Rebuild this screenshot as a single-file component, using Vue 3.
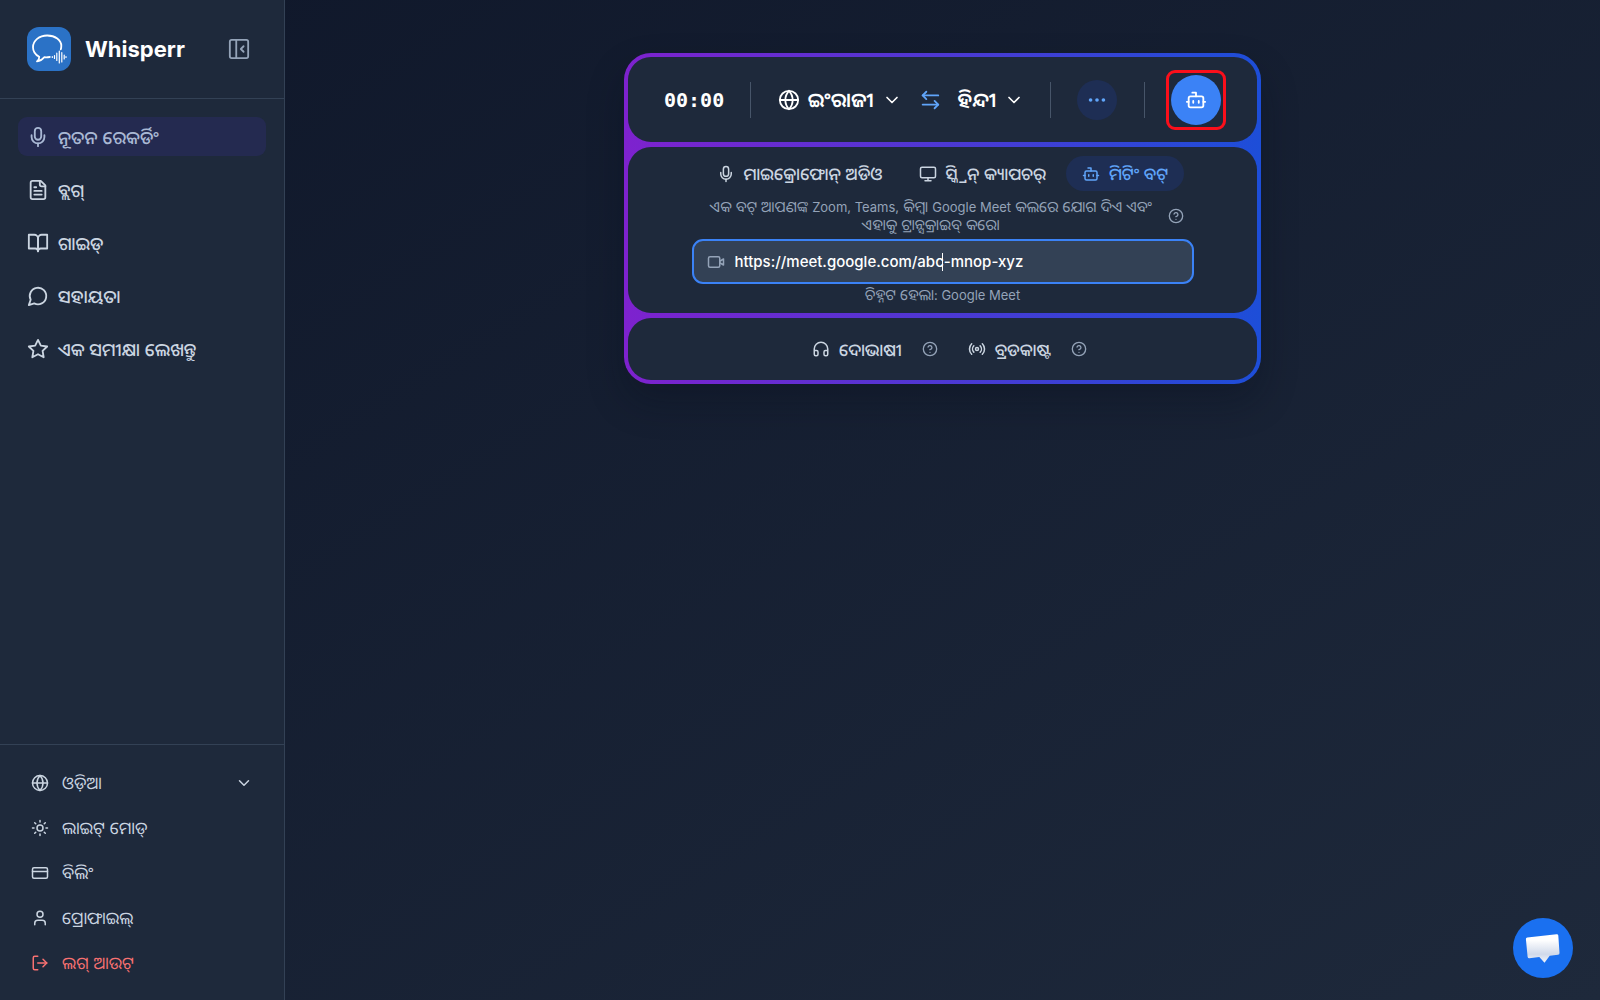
<script setup>
import { ref } from 'vue'

const icons = {
  mic: '<path d="M12 19v3"/><path d="M19 10v2a7 7 0 0 1-14 0v-2"/><rect x="8.5" y="2" width="7" height="13" rx="3.5"/>',
  file: '<path d="M15 2H6a2 2 0 0 0-2 2v16a2 2 0 0 0 2 2h12a2 2 0 0 0 2-2V7Z"/><path d="M14 2v4a2 2 0 0 0 2 2h4"/><path d="M10 9H8"/><path d="M16 13H8"/><path d="M16 17H8"/>',
  book: '<path d="M2 3h6a4 4 0 0 1 4 4v14a3 3 0 0 0-3-3H2z"/><path d="M22 3h-6a4 4 0 0 0-4 4v14a3 3 0 0 1 3-3h7z"/>',
  chat: '<path d="M7.9 20A9 9 0 1 0 4 16.1L2 22Z"/>',
  star: '<path d="M12 2l3.09 6.26L22 9.27l-5 4.87 1.18 6.88L12 17.77l-6.18 3.25L7 14.14 2 9.27l6.91-1.01z"/>',
  globe: '<circle cx="12" cy="12" r="10"/><path d="M12 2a14.5 14.5 0 0 0 0 20 14.5 14.5 0 0 0 0-20"/><path d="M2 12h20"/>',
  sun: '<circle cx="12" cy="12" r="4"/><path d="M12 2v2M12 20v2M4.93 4.93l1.41 1.41M17.66 17.66l1.41 1.41M2 12h2M20 12h2M6.34 17.66l-1.41 1.41M19.07 4.93l-1.41 1.41"/>',
  card: '<rect x="2" y="5" width="20" height="14" rx="2"/><path d="M2 10h20"/>',
  user: '<path d="M19 21v-2a4 4 0 0 0-4-4H9a4 4 0 0 0-4 4v2"/><circle cx="12" cy="7" r="4"/>',
  logout: '<path d="M9 21H5a2 2 0 0 1-2-2V5a2 2 0 0 1 2-2h4"/><path d="m16 17 5-5-5-5"/><path d="M21 12H9"/>',
  chevron: '<path d="m6 9 6 6 6-6"/>',
  swap: '<path d="M8 3 4 7l4 4"/><path d="M4 7h17"/><path d="m17 21 4-4-4-4"/><path d="M21 17H4"/>',
  dots: '<g fill="currentColor"><circle cx="12" cy="12" r="1"/><circle cx="19" cy="12" r="1"/><circle cx="5" cy="12" r="1"/></g>',
  bot: '<path d="M12 8V4H8"/><rect width="16" height="12" x="4" y="8" rx="2"/><path d="M2 14h2M20 14h2M15 13v2M9 13v2"/>',
  monitor: '<rect width="20" height="14" x="2" y="3" rx="2"/><path d="M8 21h8M12 17v4"/>',
  help: '<circle cx="12" cy="12" r="10"/><path d="M9.09 9a3 3 0 0 1 5.83 1c0 2-3 3-3 3"/><path d="M12 17h.01"/>',
  video: '<path d="m17 11 5-3v8l-5-3"/><rect x="2" y="5" width="15" height="14" rx="2"/>',
  headphones: '<path d="M3 14h3a2 2 0 0 1 2 2v3a2 2 0 0 1-2 2H5a2 2 0 0 1-2-2v-7a9 9 0 0 1 18 0v7a2 2 0 0 1-2 2h-1a2 2 0 0 1-2-2v-3a2 2 0 0 1 2-2h3"/>',
  radio: '<path d="M4.9 19.1C1 15.2 1 8.8 4.9 4.9M7.8 16.2c-2.3-2.3-2.3-6.1 0-8.5M16.2 7.8c2.3 2.3 2.3 6.1 0 8.5M19.1 4.9C23 8.8 23 15.1 19.1 19"/><circle cx="12" cy="12" r="2"/>',
  panel: '<rect width="20" height="20" x="2" y="2" rx="2"/><path d="M9 2v20M17 15l-3-3 3-3"/>'
}

const nav = [
  { icon: 'mic', label: 'ନୂତନ ରେକର୍ଡିଂ', active: true },
  { icon: 'file', label: 'ବ୍ଲଗ୍' },
  { icon: 'book', label: 'ଗାଇଡ୍' },
  { icon: 'chat', label: 'ସହାୟତା' },
  { icon: 'star', label: 'ଏକ ସମୀକ୍ଷା ଲେଖନ୍ତୁ' }
]
const account = [
  { icon: 'globe', label: 'ଓଡ଼ିଆ', menu: true },
  { icon: 'sun', label: 'ଲାଇଟ୍ ମୋଡ୍' },
  { icon: 'card', label: 'ବିଲିଂ' },
  { icon: 'user', label: 'ପ୍ରୋଫାଇଲ୍' },
  { icon: 'logout', label: 'ଲଗ୍ ଆଉଟ୍', danger: true }
]
const sources = [
  { icon: 'mic', label: 'ମାଇକ୍ରୋଫୋନ୍ ଅଡିଓ' },
  { icon: 'monitor', label: 'ସ୍କ୍ରିନ୍ କ୍ୟାପଚର୍' },
  { icon: 'bot', label: 'ମିଟିଂ ବଟ୍', active: true }
]
const link = ref('https://meet.google.com/abc-mnop-xyz')
</script>

<template>
  <div class="app">
    <aside class="sidebar">
      <header class="brand">
        <svg class="logo" viewBox="0 0 44 44" aria-hidden="true">
          <rect width="44" height="44" rx="12" fill="#2b72c6" />
          <g fill="none" stroke="#fff" stroke-linecap="round" stroke-linejoin="round">
            <path stroke-width="1.8" d="M33.8 22.3c.4-1.2.5-2.3.5-3.5C34.300 12.800 28.200 8.500 20.200 8.500S6 13.500 6 20.200c0 4.200 2.200 7.400 6.200 9.600.2 1.600-.6 3.200-2.200 4.600 3.600-.4 5.600-2.200 7.200-4.200 1.900.2 3.700.1 5.600-.2" />
            <path stroke-width="1.2" d="M25.3 29.500v1M27.500 28.500v3M29.800 26v7.500M32.300 24v12M34.800 25.500V35M37.200 28v4M39 29.500v1" />
          </g>
        </svg>
        <h1>Whisperr</h1>
        <button class="collapse" type="button" aria-label="Collapse">
          <svg class="ic s22" viewBox="0 0 24 24" v-html="icons.panel"></svg>
        </button>
      </header>

      <nav class="nav">
        <a v-for="n in nav" :key="n.icon" href="#" :class="{ active: n.active }">
          <svg class="ic s22" viewBox="0 0 24 24" v-html="icons[n.icon]"></svg>
          <span>{{ n.label }}</span>
        </a>
      </nav>

      <div class="account">
        <button v-for="a in account" :key="a.icon" type="button" :class="{ danger: a.danger }">
          <svg class="ic s18" viewBox="0 0 24 24" v-html="icons[a.icon]"></svg>
          <span>{{ a.label }}</span>
          <svg v-if="a.menu" class="ic s18 end" viewBox="0 0 24 24" v-html="icons.chevron"></svg>
        </button>
      </div>
    </aside>

    <main class="main">
      <section class="recorder">
        <div class="panel controls">
          <time class="timer">00:00</time>
          <i class="rule"></i>
          <div class="langs">
            <button class="lang" type="button">
              <svg class="ic s22" viewBox="0 0 24 24" v-html="icons.globe"></svg>
              <span>ଇଂରାଜୀ</span>
              <svg class="ic s20" viewBox="0 0 24 24" v-html="icons.chevron"></svg>
            </button>
            <button class="swap" type="button" aria-label="Swap">
              <svg class="ic s22" viewBox="0 0 24 24" v-html="icons.swap"></svg>
            </button>
            <button class="lang" type="button">
              <span>ହିନ୍ଦୀ</span>
              <svg class="ic s20" viewBox="0 0 24 24" v-html="icons.chevron"></svg>
            </button>
          </div>
          <i class="rule"></i>
          <button class="more" type="button" aria-label="More">
            <svg class="ic s22" viewBox="0 0 24 24" v-html="icons.dots"></svg>
          </button>
          <i class="rule"></i>
          <div class="highlight">
            <button class="start" type="button" aria-label="Start">
              <svg class="ic s22" viewBox="0 0 24 24" v-html="icons.bot"></svg>
            </button>
          </div>
        </div>

        <div class="panel source">
          <div class="tabs">
            <button v-for="s in sources" :key="s.icon" type="button" :class="{ active: s.active }">
              <svg class="ic s18" viewBox="0 0 24 24" v-html="icons[s.icon]"></svg>
              <span>{{ s.label }}</span>
            </button>
          </div>
          <div class="about">
            <p>
              ଏକ ବଟ୍ ଆପଣଙ୍କ <span class="latin">Zoom, Teams,</span> କିମ୍ବା
              <span class="latin">Google Meet</span> କଲରେ ଯୋଗ ଦିଏ ଏବଂ<br>ଏହାକୁ ଟ୍ରାନ୍ସକ୍ରାଇବ୍ କରେ।
            </p>
            <svg class="ic s16" viewBox="0 0 24 24" v-html="icons.help"></svg>
          </div>
          <label class="field">
            <svg class="ic s18" viewBox="0 0 24 24" v-html="icons.video"></svg>
            <input v-model="link" type="text" aria-label="URL">
            <i class="caret"></i>
          </label>
          <p class="detected">ଚିହ୍ନଟ ହେଲା<span class="latin">: Google Meet</span></p>
        </div>

        <div class="panel modes">
          <div class="mode">
            <button type="button">
              <svg class="ic s18" viewBox="0 0 24 24" v-html="icons.headphones"></svg>
              <span>ଦୋଭାଷୀ</span>
            </button>
            <svg class="ic s16 hint" viewBox="0 0 24 24" v-html="icons.help"></svg>
          </div>
          <div class="mode">
            <button type="button">
              <svg class="ic s18" viewBox="0 0 24 24" v-html="icons.radio"></svg>
              <span>ବ୍ରଡକାଷ୍ଟ</span>
            </button>
            <svg class="ic s16 hint" viewBox="0 0 24 24" v-html="icons.help"></svg>
          </div>
        </div>
      </section>
    </main>

    <button class="support" type="button" aria-label="Chat">
      <svg viewBox="0 0 60 60" aria-hidden="true">
        <defs>
          <linearGradient id="bubble" x1="0" y1="0" x2="0" y2="1">
            <stop offset="0.2" stop-color="#fff" />
            <stop offset="0.7" stop-color="#d0d9ea" />
            <stop offset="1" stop-color="#f2f5fb" />
          </linearGradient>
        </defs>
        <path fill="url(#bubble)" d="M14.3 19.500 43.500 16.200q1.600-.2 1.800 1.400L46.500 35q.1 1.600-1.500 1.800L36.700 37.800 31.500 44.800 26.300 39 16.400 40.200q-1.600.1-1.800-1.500L12.900 21.100q-.1-1.400 1.400-1.600z" />
      </svg>
    </button>
  </div>
</template>

<style>
body {
  background: #111a2c;
}
</style>

<style scoped>
.app {
  display: flex;
  min-height: 100vh;
  font-family: Inter, "Noto Sans Oriya", "Noto Sans", sans-serif;
  font-size: 17px;
  color: #cbd5e1;
  background: linear-gradient(to bottom right, #0f172a, #1e293b);
}
.app * {
  box-sizing: border-box;
}
button {
  display: flex;
  align-items: center;
  margin: 0;
  padding: 0;
  border: 0;
  background: none;
  font: inherit;
  color: inherit;
}
h1,
p {
  margin: 0;
}
span {
  white-space: nowrap;
}
.ic {
  flex: none;
  fill: none;
  stroke: currentColor;
  stroke-width: 2;
  stroke-linecap: round;
  stroke-linejoin: round;
}
.s16 { width: 16px; height: 16px; }
.s18 { width: 18px; height: 18px; }
.s20 { width: 20px; height: 20px; }
.s22 { width: 22px; height: 22px; }

.sidebar {
  display: flex;
  flex-direction: column;
  flex: none;
  width: 285px;
  background: #1e293b;
  border-right: 1px solid #334155;
}
.brand {
  display: flex;
  align-items: center;
  gap: 14px;
  height: 99px;
  padding: 0 34px 0 27px;
  border-bottom: 1px solid #334155;
}
.logo {
  width: 44px;
  height: 44px;
}
h1 {
  font-size: 22px;
  font-weight: 700;
  color: #fff;
}
.collapse {
  margin-left: auto;
  color: #94a3b8;
}
.nav {
  display: flex;
  flex-direction: column;
  gap: 14px;
  padding: 18px;
}
.nav a {
  display: flex;
  align-items: center;
  gap: 9px;
  height: 39px;
  padding: 0 9px;
  border-radius: 9px;
  font-size: 18px;
  font-weight: 500;
  color: #cbd5e1;
  text-decoration: none;
}
.nav a.active {
  color: #a9b8d4;
  background: #242a50;
}
.account {
  display: flex;
  flex-direction: column;
  gap: 4px;
  margin-top: auto;
  padding: 17px 31px;
  border-top: 1px solid #334155;
}
.account button {
  gap: 13px;
  height: 41px;
}
.account .danger {
  color: #f87171;
}
.end {
  margin-left: auto;
}

.main {
  flex: 1;
  padding: 53px 27px;
}
.recorder {
  display: flex;
  flex-direction: column;
  gap: 5px;
  max-width: 637px;
  margin: 0 auto;
  padding: 4px;
  border-radius: 27px;
  background: linear-gradient(to right, #7e22ce, #1d4ed8);
  box-shadow: 0 18px 36px rgba(8, 13, 28, 0.3);
}
.panel {
  border-radius: 23px;
  background: #1e293b;
}
.controls {
  display: flex;
  align-items: center;
  justify-content: space-between;
  height: 85px;
  padding: 0 36px;
  color: #fff;
}
.timer {
  font-family: "DejaVu Sans Mono", monospace;
  font-size: 20px;
  font-weight: 700;
}
.rule {
  width: 1px;
  height: 36px;
  background: #475569;
}
.langs {
  display: flex;
  align-items: center;
  gap: 17px;
}
.lang {
  gap: 8px;
  font-size: 20px;
  font-weight: 600;
}
.swap {
  color: #60a5fa;
}
.more,
.start {
  justify-content: center;
  border-radius: 50%;
}
.more {
  width: 40px;
  height: 40px;
  color: #60a5fa;
  background: #1e2e54;
}
.start {
  width: 50px;
  height: 50px;
  color: #fff;
  background: #3b82f6;
}
.highlight {
  border-radius: 4px;
  outline: 3px solid #fb0f1b;
  outline-offset: 2px;
}

.source {
  display: flex;
  flex-direction: column;
  align-items: center;
  height: 166px;
  padding: 9px 0;
}
.tabs {
  display: flex;
  gap: 4px;
}
.tabs button {
  gap: 9px;
  height: 35px;
  padding: 0 16px;
  border-radius: 18px;
  font-weight: 500;
}
.tabs .active {
  color: #60a5fa;
  background: #1e2e54;
}
.about {
  display: flex;
  align-items: center;
  gap: 16px;
  margin-top: 7px;
  padding-left: 9px;
  color: #94a3b8;
}
.about p,
.detected {
  font-size: 15px;
  line-height: 18px;
  text-align: center;
  white-space: nowrap;
}
.latin {
  font-size: 13px;
  line-height: 1;
}
.field {
  position: relative;
  display: flex;
  align-items: center;
  gap: 10px;
  width: 502px;
  max-width: 100%;
  height: 47px;
  margin-top: 5px;
  padding: 0 13px;
  border: 2px solid #3b82f6;
  border-radius: 11px;
  background: #334155;
  color: #94a3b8;
}
.field input {
  flex: 1;
  min-width: 0;
  padding: 0;
  border: 0;
  outline: 0;
  background: none;
  font: inherit;
  font-size: 15px;
  font-weight: 500;
  color: #fff;
}
.caret {
  position: absolute;
  left: 248px;
  top: 12px;
  width: 1px;
  height: 18px;
  background: #fff;
}
.detected {
  margin-top: 2px;
  color: #94a3b8;
}
.modes {
  display: flex;
  align-items: center;
  justify-content: center;
  gap: 30px;
  height: 62px;
  padding-left: 14px;
}
.mode {
  display: flex;
  align-items: center;
  gap: 20px;
}
.mode button {
  gap: 9px;
  font-weight: 500;
}
.hint {
  color: #94a3b8;
}
.support {
  position: fixed;
  right: 27px;
  bottom: 22px;
  width: 60px;
  height: 60px;
  border-radius: 50%;
  background: #1a70f0;
}
.support svg {
  width: 60px;
  height: 60px;
}
</style>
